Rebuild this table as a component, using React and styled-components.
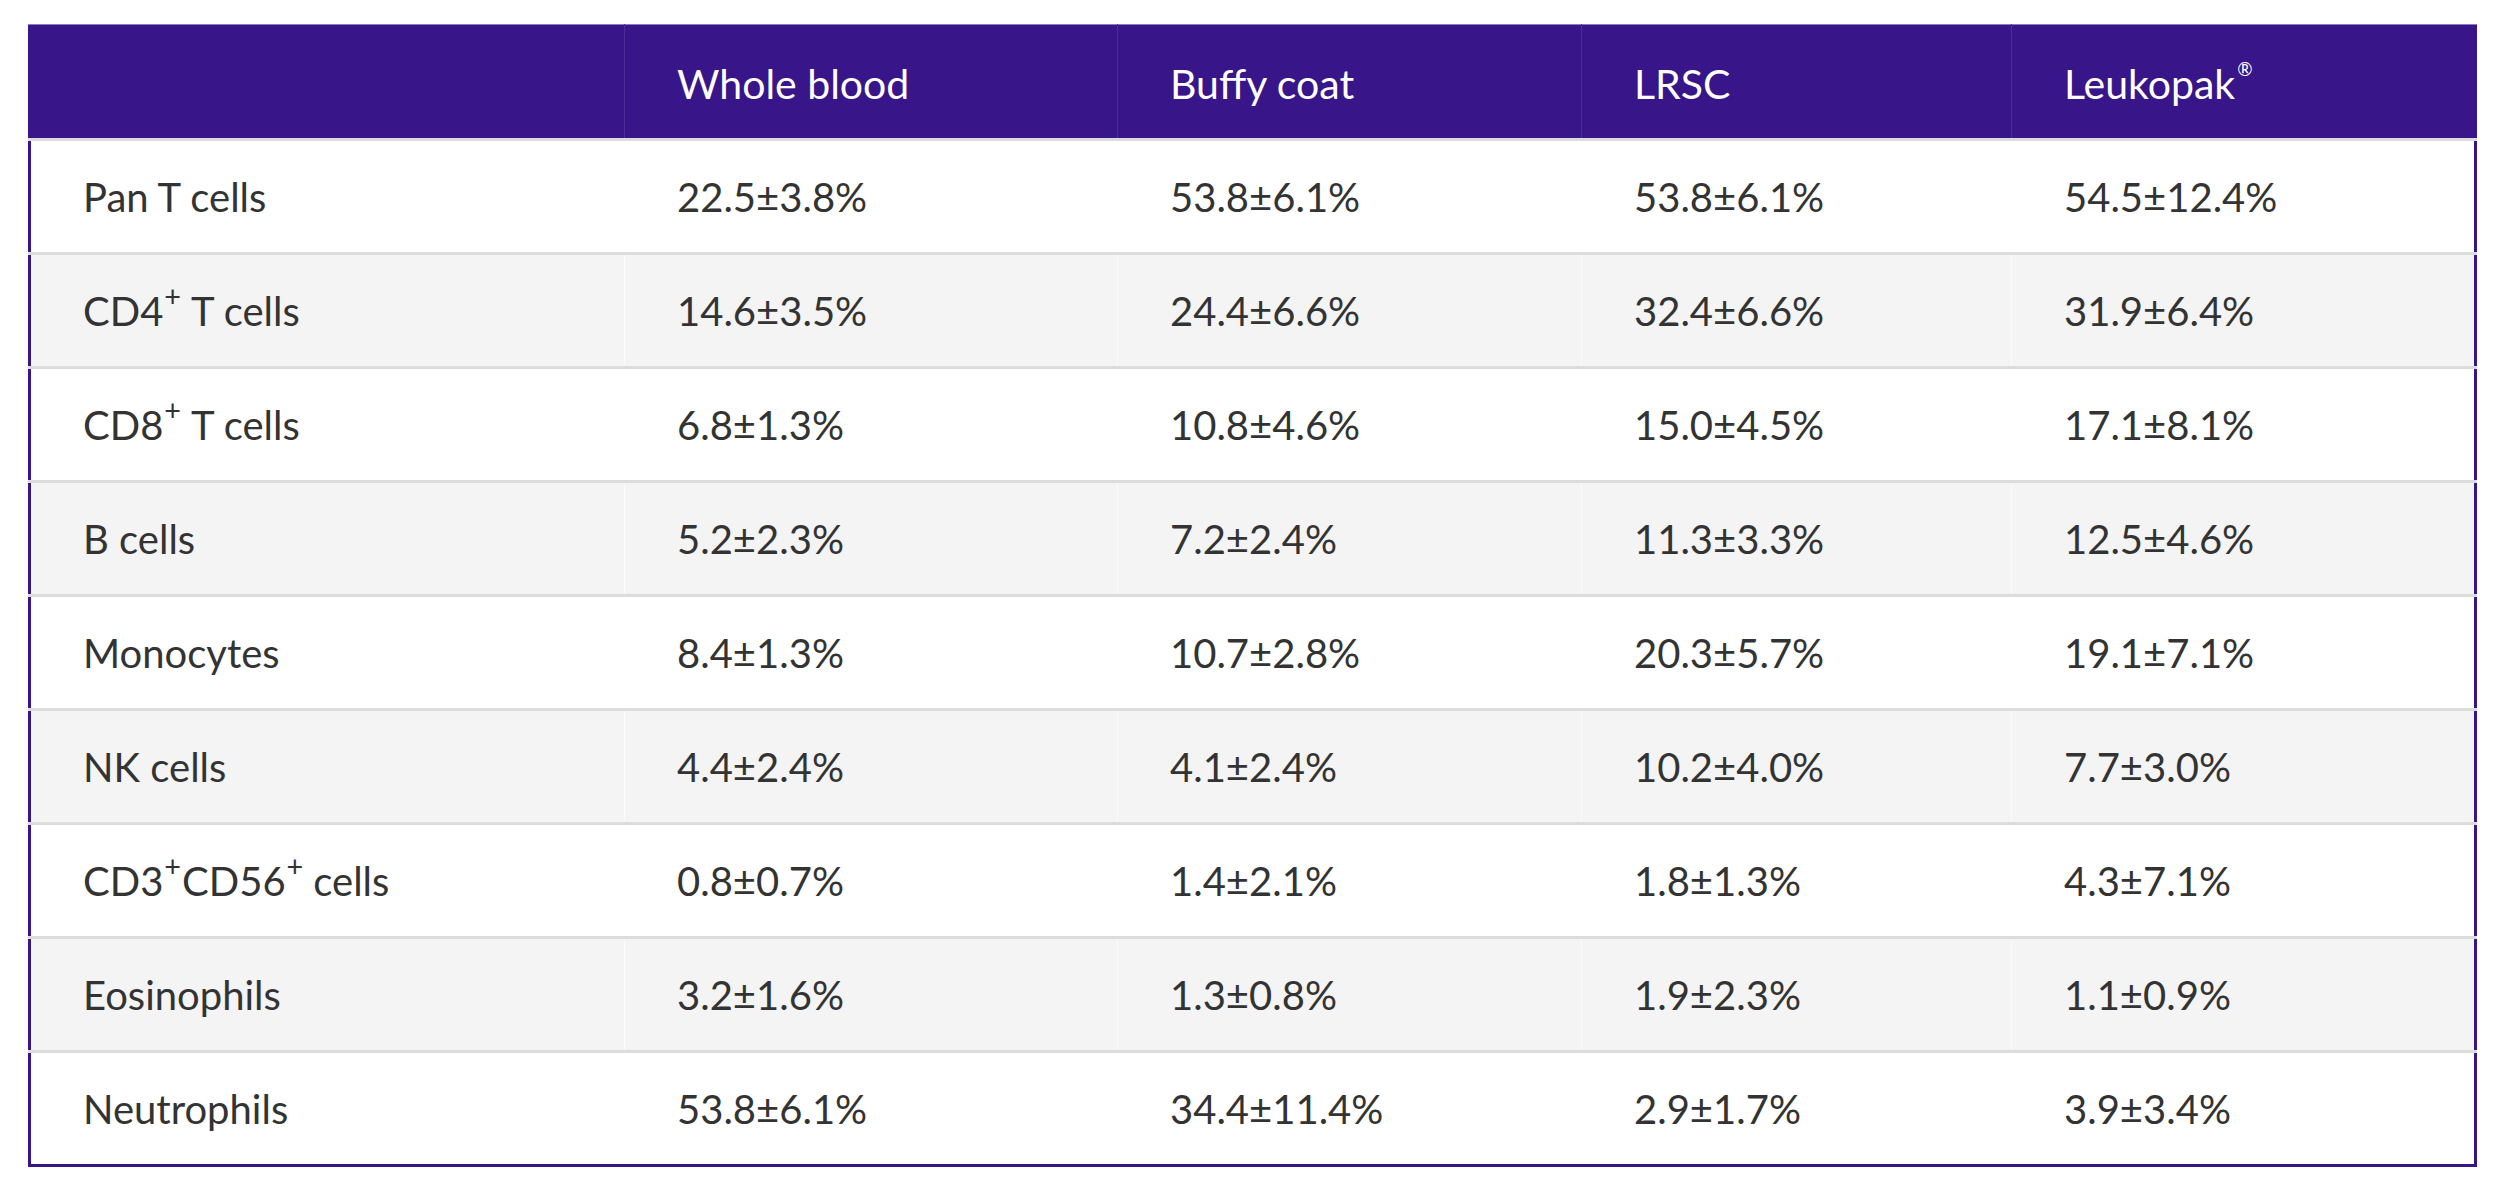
import styled, { createGlobalStyle } from "styled-components";

const GlobalStyle = createGlobalStyle`
  html, body {
    margin: 0;
    padding: 0;
    background: #ffffff;
  }
  body {
    font-family: "Lato", "Liberation Sans", sans-serif;
  }
`;

const PURPLE = "#381588";
const COLS = "597px 493px 464px 430px 465px";

const columns = ["", "Whole blood", "Buffy coat", "LRSC", "Leukopak"];

const rows = [
  { name: "Pan T cells", values: ["22.5±3.8%", "53.8±6.1%", "53.8±6.1%", "54.5±12.4%"] },
  { name: ["CD4", "+", "T cells"], values: ["14.6±3.5%", "24.4±6.6%", "32.4±6.6%", "31.9±6.4%"] },
  { name: ["CD8", "+", "T cells"], values: ["6.8±1.3%", "10.8±4.6%", "15.0±4.5%", "17.1±8.1%"] },
  { name: "B cells", values: ["5.2±2.3%", "7.2±2.4%", "11.3±3.3%", "12.5±4.6%"] },
  { name: "Monocytes", values: ["8.4±1.3%", "10.7±2.8%", "20.3±5.7%", "19.1±7.1%"] },
  { name: "NK cells", values: ["4.4±2.4%", "4.1±2.4%", "10.2±4.0%", "7.7±3.0%"] },
  { name: "cd3cd56", values: ["0.8±0.7%", "1.4±2.1%", "1.8±1.3%", "4.3±7.1%"] },
  { name: "Eosinophils", values: ["3.2±1.6%", "1.3±0.8%", "1.9±2.3%", "1.1±0.9%"] },
  { name: "Neutrophils", values: ["53.8±6.1%", "34.4±11.4%", "2.9±1.7%", "3.9±3.4%"] },
];

export default function App() {
  return (
    <Page>
      <GlobalStyle />
      <Table>
        <HeaderRow>
          {columns.map((col, i) => (
            <HeaderCell key={i} first={i === 0}>
              {col}
              {col === "Leukopak" && <Reg>®</Reg>}
            </HeaderCell>
          ))}
        </HeaderRow>
        {rows.map((row, r) => (
          <BodyRow key={r} shaded={r % 2 === 1} last={r === rows.length - 1}>
            <Cell first>{renderName(row.name)}</Cell>
            {row.values.map((v, i) => (
              <Cell key={i}>{v}</Cell>
            ))}
          </BodyRow>
        ))}
      </Table>
    </Page>
  );
}

function renderName(name) {
  if (name === "cd3cd56") {
    return (
      <>
        CD3<Sup>+</Sup>CD56<Sup spaced>+</Sup>cells
      </>
    );
  }
  if (Array.isArray(name)) {
    return (
      <>
        {name[0]}
        <Sup spaced>{name[1]}</Sup>
        {name[2]}
      </>
    );
  }
  return name;
}

const Page = styled.div`
  padding: 24px 0 0 28px;
`;

const Table = styled.div`
  width: 2449px;
  display: flex;
  flex-direction: column;
`;

const HeaderRow = styled.div`
  display: grid;
  grid-template-columns: ${COLS};
  height: 114px;
  background: ${PURPLE};
  box-shadow: inset 0 1px 0 #8e7bbd;
`;

const HeaderCell = styled.div`
  display: flex;
  align-items: center;
  padding: 4px 0 0 52px;
  color: #ffffff;
  font-size: 41px;
  white-space: pre;
  border-left: ${(p) => (p.first ? "none" : "1px solid #4d2d96")};
  margin-left: ${(p) => (p.first ? "0" : "-1px")};
`;

const Reg = styled.span`
  font-size: 0.45em;
  position: relative;
  top: -0.75em;
  margin-left: 2px;
`;

const BodyRow = styled.div`
  display: grid;
  grid-template-columns: ${COLS};
  height: 111px;
  border-top: 3px solid #dcdcdc;
  border-bottom: ${(p) => (p.last ? `3px solid ${PURPLE}` : "none")};
  background: ${(p) => (p.shaded ? "#f4f4f4" : "#ffffff")};
  box-sizing: content-box;
`;

const Cell = styled.div`
  display: flex;
  align-items: center;
  padding-left: 52px;
  color: #333333;
  font-size: 40px;
  white-space: pre;
  border-left: ${(p) => (p.first ? `3px solid ${PURPLE}` : "1px solid rgba(255,255,255,0.6)")};
  margin-left: ${(p) => (p.first ? "0" : "-1px")};
  &:last-child {
    border-right: 3px solid ${PURPLE};
  }
`;

const Sup = styled.span`
  font-size: 0.72em;
  position: relative;
  top: -0.5em;
  margin: 0 ${(p) => (p.spaced ? "10px" : "1px")} 0 1px;
`;
